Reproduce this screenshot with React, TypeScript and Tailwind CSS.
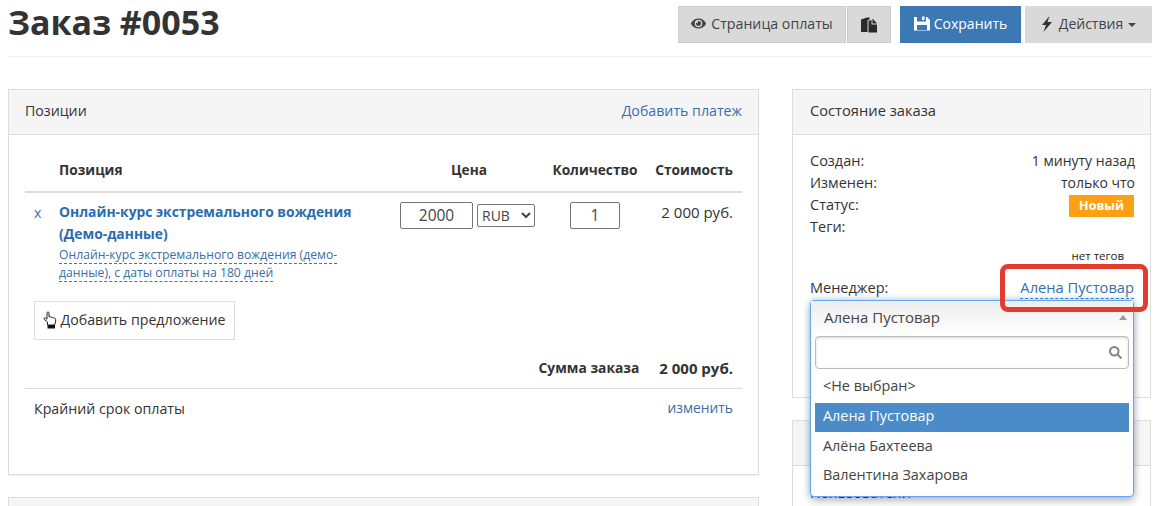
import { FaEye, FaSearch } from "react-icons/fa";
import type { ReactNode } from "react";

const link = "text-[#3a6ea8]";
const dashed = "border-b border-dashed border-[#337ab7]";

function Duplicate() {
  return (
    <svg width="16" height="16" viewBox="0 0 16 16" fill="#2b2b2b">
      <path d="M0 2.5 L6 0.5 L8.5 0.5 V2.5 L6.5 3.2 V15 H0 Z" />
      <path d="M7.5 4 L10.5 3 V7.5 H16 V15.5 H7.5 Z" />
      <path d="M11.5 1.5 L16 6.5 H11.5 Z" />
    </svg>
  );
}

function Floppy() {
  return (
    <svg width="16" height="15" viewBox="0 0 16 15" fill="#fff">
      <path fillRule="evenodd" d="M0 1 H3 V5.5 H12 V1 H13 L16 4 V14.5 H0 Z M3 9 V14 H13 V9 Z" />
      <rect x="8" y="0.5" width="2.5" height="3.5" />
    </svg>
  );
}

function Flash() {
  return (
    <svg width="12" height="16" viewBox="0 0 12 16" fill="#333">
      <path d="M8.5 0 L1 9 H5 L2.5 16 L11 6 H6.5 Z" />
    </svg>
  );
}

function Hand() {
  return (
    <svg width="14" height="18" viewBox="0 0 14 18">
      <path d="M4.5 11 L1.2 8.4 C0.4 7.6 1.4 6.4 2.4 7 L4 8.2 V2 C4 0.6 6 0.6 6 2 V6 C6.4 5.4 7.8 5.6 8 6.4 C8.6 6 9.8 6.2 10 7 C10.8 6.8 12.6 7 12.6 8.4 V11 L11.5 14 H4.5 Z" fill="#fff" stroke="#222" strokeWidth="1" strokeLinejoin="round" />
      <rect x="4.5" y="14" width="7.5" height="3.5" fill="#111" />
    </svg>
  );
}

function Row({ label, children }: { label: string; children?: ReactNode }) {
  return (
    <div className="flex justify-between h-[22px] leading-[22px]">
      <span>{label}</span>
      <span className="text-[14px]">{children}</span>
    </div>
  );
}

export default function App() {
  return (
    <div className="relative w-[1162px] h-[506px] overflow-hidden bg-white text-[#333] text-[14.2px] font-['Open_Sans','Liberation_Sans',sans-serif]">
      <header className="ml-2 mr-[10px] h-[57px] border-b border-[#eee] flex justify-between items-start">
        <h1 className="text-[34px] leading-[38px] mt-[3px] font-bold text-[#333]">Заказ #0053</h1>
        <div className="flex mt-[6px] h-[37px]">
          <button className="w-[168px] pb-[2px] flex items-center justify-center gap-[5px] bg-[#d9d9d9] border border-[#ccc] text-[#444]"><FaEye size={15} />Страница оплаты</button>
          <button className="w-[44px] ml-px flex items-center justify-center bg-[#d9d9d9] border border-[#ccc]"><Duplicate /></button>
          <button className="w-[121px] ml-[9px] pb-[2px] flex items-center justify-center gap-1 bg-[#3c78b4] text-white text-[14px]"><Floppy />Сохранить</button>
          <button className="w-[127px] ml-1 pb-[2px] flex items-center justify-center gap-[6px] bg-[#d9d9d9] text-[#444] text-[14px]"><Flash />Действия<span className="w-0 h-0 -ml-px mt-[2px] border-x-4 border-x-transparent border-t-4 border-t-[#444]" /></button>
        </div>
      </header>

      <main className="ml-2 mr-[11px] mt-8 flex gap-[33px] items-start">
        <section className="w-[751px] shrink-0">
          <div className="h-[386px] border border-[#ddd] shadow-[0_1px_1px_rgba(0,0,0,0.05)]">
            <div className="h-[45px] bg-[#f5f5f5] border-b border-[#ddd] pl-4 pr-4 pb-[2px] flex justify-between items-center">
              <span>Позиции</span>
              <a className={link}>Добавить платеж</a>
            </div>
            <div className="px-4">
              <div className="h-[58px] border-b-2 border-[#ddd] flex items-end pb-[10px] font-bold text-[13.7px]">
                <span className="ml-[34px] w-[340px]">Позиция</span>
                <span className="w-[140px] text-center">Цена</span>
                <span className="w-[112px] text-center">Количество</span>
                <span className="flex-1 text-right pr-[9px]">Стоимость</span>
              </div>
              <div className="flex pt-2 h-[108px]">
                <span className={`${link} w-[34px] pl-[9px] leading-[24px]`}>x</span>
                <div className="w-[341px]">
                  <a className="text-[#2a6cb0] font-bold text-[13.85px] leading-[22px] block w-[300px]">Онлайн-курс экстремального вождения (Демо-данные)</a>
                  <div className="text-[12.2px] leading-[18px] w-[285px] mt-px">
                    <a className={`${link} ${dashed}`}>Онлайн-курс экстремального вождения (демо-данные), с даты оплаты на 180 дней</a>
                  </div>
                </div>
                <div className="flex items-start">
                  <input readOnly value="2000" className="w-[73px] h-[27px] mt-px pb-[2px] border border-[#767676] rounded-[2px] text-center text-[15.5px] text-[#444]" />
                  <select className="w-[58px] h-[23px] mt-[3px] ml-1 border border-[#767676] rounded-[2px] bg-white text-[14px] text-[#444]"><option>RUB</option></select>
                  <input readOnly value="1" className="w-[50px] h-[27px] mt-px pb-[2px] ml-[35px] border border-[#767676] rounded-[2px] text-center text-[15.5px] text-[#444]" />
                </div>
                <span className="flex-1 text-right pr-[9px] leading-[24px] -mt-[1px] text-[15px]">2 000 руб.</span>
              </div>
              <button className="ml-[9px] w-[201px] h-[39px] pb-[2px] border border-[#ddd] flex items-center justify-center gap-[3px] text-[#333]"><Hand />Добавить предложение</button>
              <div className="h-[49px] pt-2 border-b border-[#ddd] flex justify-end items-center font-bold text-[13.8px] pr-[9px] gap-5">
                <span>Сумма заказа</span>
                <span className="text-[15px]">2 000 руб.</span>
              </div>
              <div className="flex justify-between px-[9px] pt-[9px]">
                <span>Крайний срок оплаты</span>
                <a className={`${link} text-[13.8px]`}>изменить</a>
              </div>
            </div>
          </div>
          <div className="mt-[22px] h-[40px] border border-[#ddd] bg-[#f5f5f5]" />
        </section>

        <aside className="w-[359px] shrink-0">
          <div className="h-[309px] border border-[#ddd]">
            <div className="h-[45px] bg-[#f5f5f5] border-b border-[#ddd] pl-[17px] pb-[3px] flex items-center text-[14.7px]">Состояние заказа</div>
            <div className="pl-[17px] pr-[15px] pt-[15px] text-[14.5px]">
              <Row label="Создан:">1 минуту назад</Row>
              <Row label="Изменен:">только что</Row>
              <Row label="Статус:">
                <span className="inline-block w-[65px] h-[22px] leading-[22px] -translate-x-px bg-[#ff9f14] text-white text-center font-bold text-[12.5px]">Новый</span>
              </Row>
              <Row label="Теги:" />
              <div className="text-right pr-[11px] text-[11.5px] leading-[16px] mt-[10px] text-[#222]">нет тегов</div>
              <div className="flex justify-between mt-[13px] leading-[22px]">
                <span>Менеджер:</span>
                <a className={`${link} ${dashed} leading-[20px] text-[14.7px] -translate-x-px`}>Алена Пустовар</a>
              </div>
            </div>
          </div>
          <div className="mt-[22px] h-[100px] border border-[#ddd]">
            <div className="h-[45px] bg-[#f5f5f5] border-b border-[#ddd]" />
            <div className="pl-[17px] pt-[16px] leading-[22px] text-[14.5px]">Пользователи</div>
          </div>
        </aside>
      </main>

      <div className="absolute left-[810px] top-[300px] w-[324px] h-[197px] bg-white border border-[#66a6ea] rounded-[4px] shadow-[0_4px_8px_rgba(0,0,0,0.25),0_-1px_6px_rgba(82,168,236,0.4)] text-[14.4px]">
        <div className="h-[35px] pb-[2px] bg-gradient-to-b from-[#eee] to-white flex items-center justify-between pl-[13px] pr-[6px] text-[#444] text-[15px]">
          <span>Алена Пустовар</span>
          <span className="w-0 h-0 border-x-[4px] border-x-transparent border-b-[5px] border-b-[#999]" />
        </div>
        <div className="mx-1 h-[33px] border border-[#bbb] rounded-[4px] shadow-[inset_0_1px_3px_rgba(0,0,0,0.15)] flex items-center justify-end pr-[6px]">
          <FaSearch size={13} className="text-[#888]" />
        </div>
        <div className="mx-1 mt-[2px]">
          <div className="h-[32px] leading-[30px] px-2 text-[#444]">&lt;Не выбран&gt;</div>
          <div className="h-[29px] leading-[26px] px-2 bg-[#4a8bc8] text-white">Алена Пустовар</div>
          <div className="h-[30px] leading-[28px] px-2 text-[#444]">Алёна Бахтеева</div>
          <div className="h-[29px] leading-[25px] px-2 text-[#444]">Валентина Захарова</div>
        </div>
      </div>

      <div className="absolute left-[1000px] top-[264px] w-[148px] h-[48px] border-[5px] border-[#e53b2f] rounded-[8px]" />
    </div>
  );
}
